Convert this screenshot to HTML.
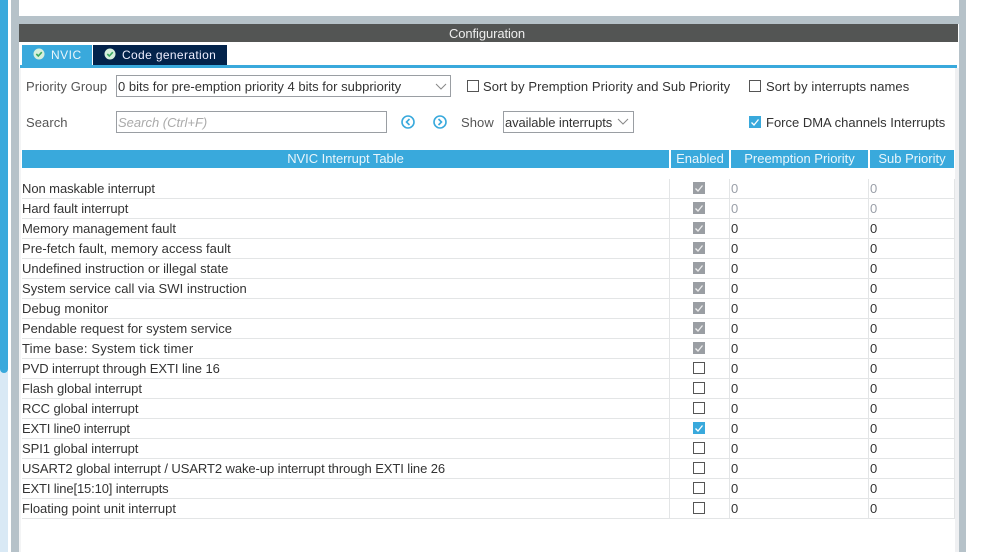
<!DOCTYPE html>
<html><head><meta charset="utf-8"><style>
html,body{margin:0;padding:0;background:#fff}
body{width:981px;height:552px;position:relative;overflow:hidden;font-family:"Liberation Sans",sans-serif;font-size:13px;color:#333;letter-spacing:.07px}
div,span{position:absolute;white-space:nowrap}
.t{line-height:20px;height:20px;margin-top:1px}
.h{top:150px;height:18px;background:#39a9dc;color:#e8f5fb;text-align:center;line-height:18px}
.b{left:22px;width:933px;height:1px;background:#e3e5e6}
.v{top:179px;width:1px;height:340px;background:#e3e5e6}
.n{left:22px;letter-spacing:-.07px}
.z{left:731px}.y{left:870px}
.g{color:#9a9fa8}
.c{left:693px;width:12px;height:12px;box-sizing:border-box}
.o{border:1px solid #555;background:#fff}
.k{background:#9a9ea3}.a{background:#39a9dc}
svg{position:absolute;left:0;top:0}
.sel{border:1px solid #9a9ea3;box-sizing:border-box;background:#fff;line-height:21px;padding-left:1px}
</style></head><body>
<div style="left:0;top:0;width:8px;height:552px;background:#d9e9f5"></div>
<div style="left:0;top:0;width:8px;height:373px;background:#39a9dc;border-radius:0 0 4px 4px"></div>
<div style="left:11px;top:0;width:8px;height:552px;background:#b6c2c9"></div>
<div style="left:959px;top:0;width:7px;height:552px;background:#b6c2c9"></div>
<div style="left:19px;top:16px;width:940px;height:8px;background:#b6c2c9"></div>
<div style="left:16px;top:24px;width:942px;height:18px;background:#535554;clip-path:inset(0 0 0 3px);color:#eee;text-align:center;line-height:19px;letter-spacing:-.1px">Configuration</div>
<div style="left:19px;top:68px;width:2px;height:484px;background:#f3f4f5"></div>
<div style="left:955px;top:68px;width:4px;height:484px;background:#eff0f2"></div>
<div style="left:22px;top:45px;width:70px;height:20px;background:#39a9dc"></div>
<div style="left:93px;top:45px;width:134px;height:20px;background:#03234b"></div>
<div style="left:20px;top:65px;width:937px;height:3px;background:#39a9dc"></div>
<div class="t" style="left:51px;top:44px;color:#e8f5fb;font-size:12px;letter-spacing:.5px">NVIC</div>
<div class="t" style="left:122px;top:44px;color:#eef;font-size:12px;letter-spacing:.36px">Code generation</div>
<div class="t" style="left:26px;top:76px;color:#555">Priority Group</div>
<div class="sel" style="left:116px;top:75px;width:335px;height:22px;letter-spacing:.013px">0 bits for pre-emption priority 4 bits for subpriority</div>
<div class="c o" style="left:467px;top:80px"></div>
<div class="t" style="left:483px;top:76px">Sort by Premption Priority and Sub Priority</div>
<div class="c o" style="left:749px;top:80px"></div>
<div class="t" style="left:766px;top:76px">Sort by interrupts names</div>
<div class="t" style="left:26px;top:112px;color:#555">Search</div>
<div class="sel" style="left:116px;top:111px;width:271px;height:22px;color:#aaa;font-style:italic;letter-spacing:0">Search (Ctrl+F)</div>
<div class="t" style="left:461px;top:112px;color:#555">Show</div>
<div class="sel" style="left:503px;top:111px;width:131px;height:22px;letter-spacing:-.1px">available interrupts</div>
<div class="c a" style="left:749px;top:116px"><svg width="12" height="12"><path d="M2.500 6.500l2.500 2.500 4.500-5.500" fill="none" stroke="#fff" stroke-width="1.300"/></svg></div>
<div class="t" style="left:766px;top:112px;letter-spacing:0">Force DMA channels Interrupts</div>
<svg width="981" height="552">
<circle cx="39" cy="54" r="5.500" fill="#d5efdc"/><path d="M36.300 54l2 2 3.500-3.800" fill="none" stroke="#3aa860" stroke-width="1.600"/>
<circle cx="110" cy="54" r="5.500" fill="#d5efdc"/><path d="M107.300 54l2 2 3.500-3.800" fill="none" stroke="#3aa860" stroke-width="1.600"/>
<circle cx="408" cy="122" r="6" fill="none" stroke="#39a9dc" stroke-width="1.600"/><path d="M409.500 119l-3 3 3 3" fill="none" stroke="#39a9dc" stroke-width="1.600"/>
<circle cx="440" cy="122" r="6" fill="none" stroke="#39a9dc" stroke-width="1.600"/><path d="M438.500 119l3 3-3 3" fill="none" stroke="#39a9dc" stroke-width="1.600"/>
<path d="M436 84l5 5 5-5M618 119l5 5 5-5" fill="none" stroke="#888" stroke-width="1"/>
</svg>
<div class="h" style="left:22px;width:647px;letter-spacing:-.05px">NVIC Interrupt Table</div>
<div class="h" style="left:671px;width:58px;letter-spacing:0">Enabled</div>
<div class="h" style="left:731px;width:137px;letter-spacing:0">Preemption Priority</div>
<div class="h" style="left:870px;width:84px;letter-spacing:0">Sub Priority</div>
<div class="v" style="left:669px"></div><div class="v" style="left:729px"></div><div class="v" style="left:868px"></div><div class="v" style="left:954px"></div>
<div class="b" style="top:198px"></div><div class="b" style="top:218px"></div><div class="b" style="top:238px"></div><div class="b" style="top:258px"></div><div class="b" style="top:278px"></div><div class="b" style="top:298px"></div><div class="b" style="top:318px"></div><div class="b" style="top:338px"></div><div class="b" style="top:358px"></div><div class="b" style="top:378px"></div><div class="b" style="top:398px"></div><div class="b" style="top:418px"></div><div class="b" style="top:438px"></div><div class="b" style="top:458px"></div><div class="b" style="top:478px"></div><div class="b" style="top:498px"></div><div class="b" style="top:518px"></div>

<div class="t n" style="top:178px">Non maskable interrupt</div><div class="c k" style="top:182px"><svg width="12" height="12"><path d="M2.500 6.500l2.500 2.500 4.500-5.500" fill="none" stroke="#eee" stroke-width="1.300"/></svg></div><div class="t z g" style="top:178px">0</div><div class="t y g" style="top:178px">0</div>
<div class="t n" style="top:198px">Hard fault interrupt</div><div class="c k" style="top:202px"><svg width="12" height="12"><path d="M2.500 6.500l2.500 2.500 4.500-5.500" fill="none" stroke="#eee" stroke-width="1.300"/></svg></div><div class="t z g" style="top:198px">0</div><div class="t y g" style="top:198px">0</div>
<div class="t n" style="top:218px;letter-spacing:-.03px">Memory management fault</div><div class="c k" style="top:222px"><svg width="12" height="12"><path d="M2.500 6.500l2.500 2.500 4.500-5.500" fill="none" stroke="#eee" stroke-width="1.300"/></svg></div><div class="t z" style="top:218px">0</div><div class="t y" style="top:218px">0</div>
<div class="t n" style="top:238px;letter-spacing:.04px">Pre-fetch fault, memory access fault</div><div class="c k" style="top:242px"><svg width="12" height="12"><path d="M2.500 6.500l2.500 2.500 4.500-5.500" fill="none" stroke="#eee" stroke-width="1.300"/></svg></div><div class="t z" style="top:238px">0</div><div class="t y" style="top:238px">0</div>
<div class="t n" style="top:258px;letter-spacing:.01px">Undefined instruction or illegal state</div><div class="c k" style="top:262px"><svg width="12" height="12"><path d="M2.500 6.500l2.500 2.500 4.500-5.500" fill="none" stroke="#eee" stroke-width="1.300"/></svg></div><div class="t z" style="top:258px">0</div><div class="t y" style="top:258px">0</div>
<div class="t n" style="top:278px;letter-spacing:.06px">System service call via SWI instruction</div><div class="c k" style="top:282px"><svg width="12" height="12"><path d="M2.500 6.500l2.500 2.500 4.500-5.500" fill="none" stroke="#eee" stroke-width="1.300"/></svg></div><div class="t z" style="top:278px">0</div><div class="t y" style="top:278px">0</div>
<div class="t n" style="top:298px;letter-spacing:.08px">Debug monitor</div><div class="c k" style="top:302px"><svg width="12" height="12"><path d="M2.500 6.500l2.500 2.500 4.500-5.500" fill="none" stroke="#eee" stroke-width="1.300"/></svg></div><div class="t z" style="top:298px">0</div><div class="t y" style="top:298px">0</div>
<div class="t n" style="top:318px;letter-spacing:-.01px">Pendable request for system service</div><div class="c k" style="top:322px"><svg width="12" height="12"><path d="M2.500 6.500l2.500 2.500 4.500-5.500" fill="none" stroke="#eee" stroke-width="1.300"/></svg></div><div class="t z" style="top:318px">0</div><div class="t y" style="top:318px">0</div>
<div class="t n" style="top:338px;letter-spacing:.18px">Time base: System tick timer</div><div class="c k" style="top:342px"><svg width="12" height="12"><path d="M2.500 6.500l2.500 2.500 4.500-5.500" fill="none" stroke="#eee" stroke-width="1.300"/></svg></div><div class="t z" style="top:338px">0</div><div class="t y" style="top:338px">0</div>
<div class="t n" style="top:358px">PVD interrupt through EXTI line 16</div><div class="c o" style="top:362px"></div><div class="t z" style="top:358px">0</div><div class="t y" style="top:358px">0</div>
<div class="t n" style="top:378px">Flash global interrupt</div><div class="c o" style="top:382px"></div><div class="t z" style="top:378px">0</div><div class="t y" style="top:378px">0</div>
<div class="t n" style="top:398px">RCC global interrupt</div><div class="c o" style="top:402px"></div><div class="t z" style="top:398px">0</div><div class="t y" style="top:398px">0</div>
<div class="t n" style="top:418px;letter-spacing:-.17px">EXTI line0 interrupt</div><div class="c a" style="top:422px"><svg width="12" height="12"><path d="M2.500 6.500l2.500 2.500 4.500-5.500" fill="none" stroke="#fff" stroke-width="1.300"/></svg></div><div class="t z" style="top:418px">0</div><div class="t y" style="top:418px">0</div>
<div class="t n" style="top:438px">SPI1 global interrupt</div><div class="c o" style="top:442px"></div><div class="t z" style="top:438px">0</div><div class="t y" style="top:438px">0</div>
<div class="t n" style="top:458px;letter-spacing:-.08px">USART2 global interrupt / USART2 wake-up interrupt through EXTI line 26</div><div class="c o" style="top:462px"></div><div class="t z" style="top:458px">0</div><div class="t y" style="top:458px">0</div>
<div class="t n" style="top:478px;letter-spacing:-.14px">EXTI line[15:10] interrupts</div><div class="c o" style="top:482px"></div><div class="t z" style="top:478px">0</div><div class="t y" style="top:478px">0</div>
<div class="t n" style="top:498px;letter-spacing:0">Floating point unit interrupt</div><div class="c o" style="top:502px"></div><div class="t z" style="top:498px">0</div><div class="t y" style="top:498px">0</div>
</body></html>
